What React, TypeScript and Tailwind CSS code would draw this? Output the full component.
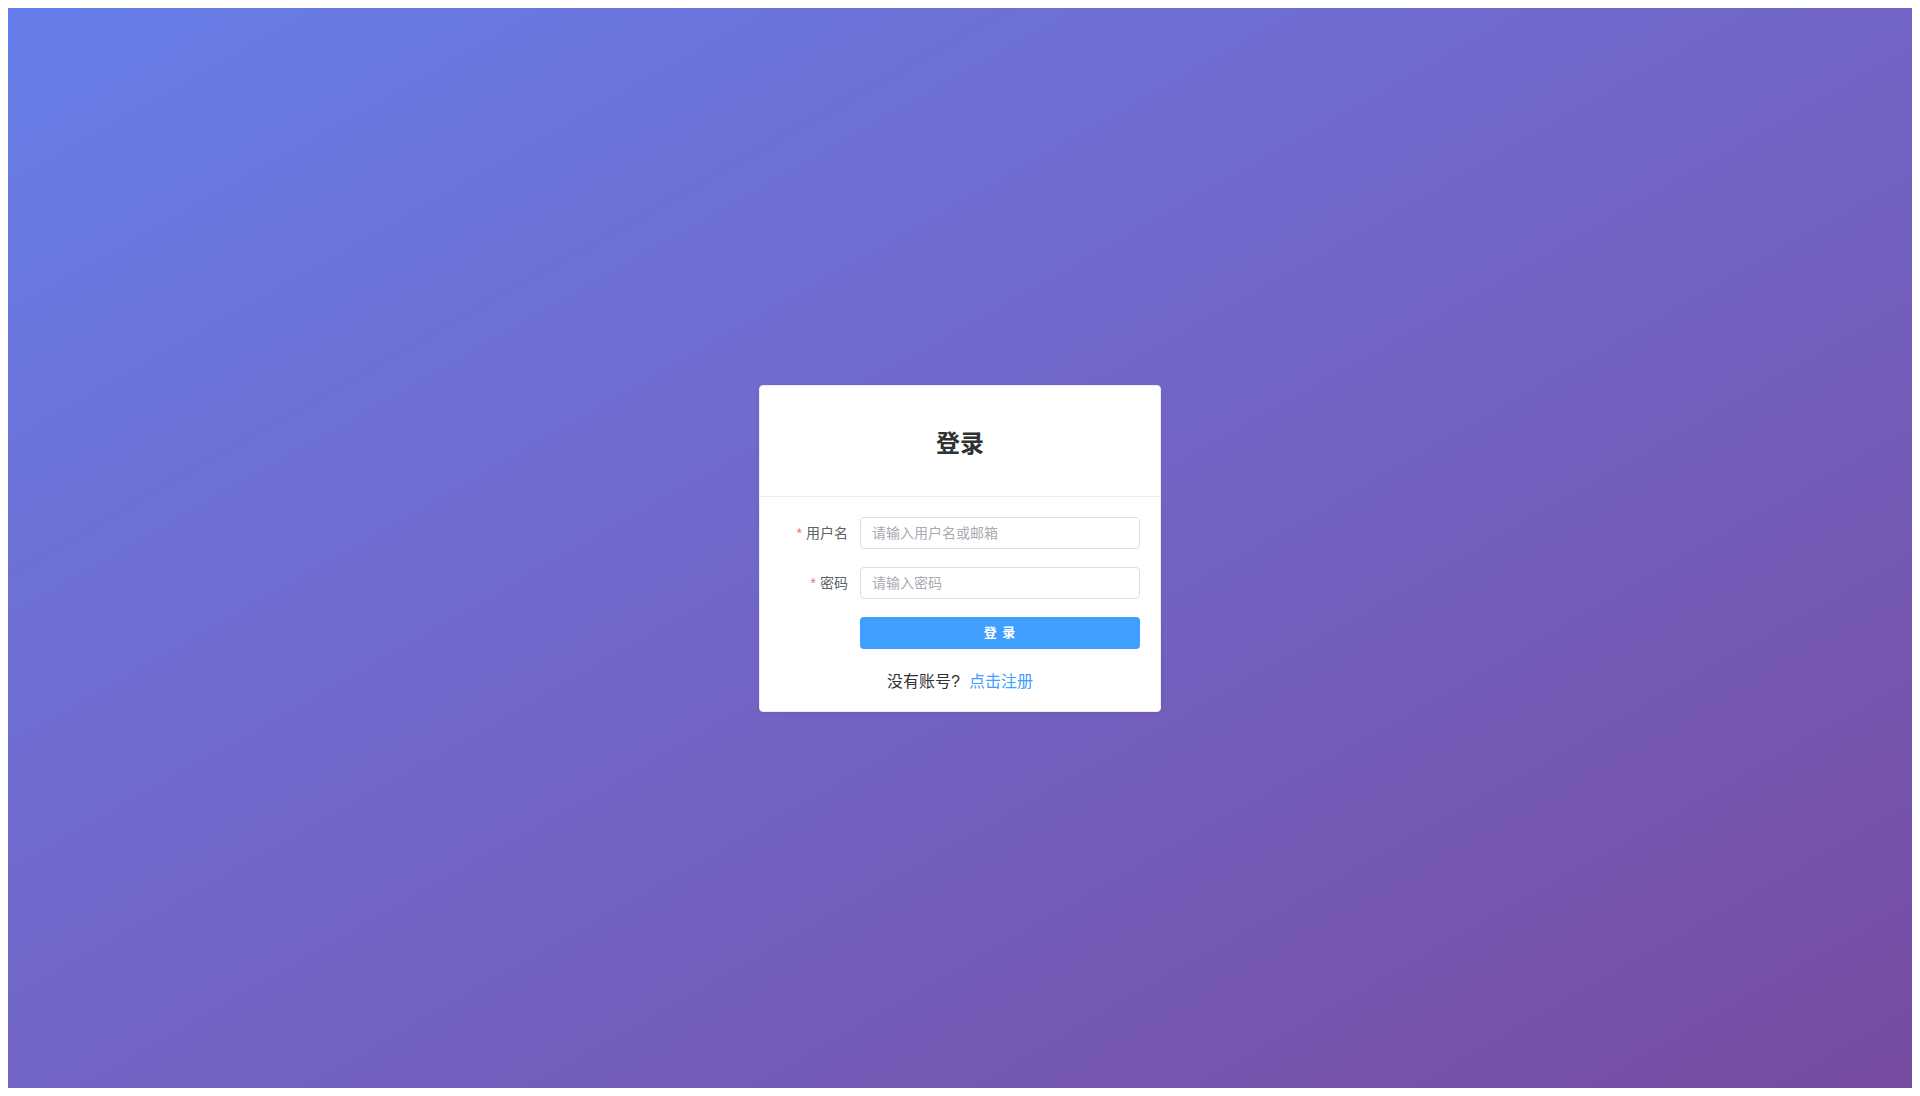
import { useState } from 'react'

const font = 'font-["Liberation_Sans","Noto_Sans_CJK_SC",sans-serif]'

function FormItem({
  label,
  placeholder,
  type = 'text',
  value,
  onChange,
}: {
  label: string
  placeholder: string
  type?: string
  value: string
  onChange: (v: string) => void
}) {
  return (
    <div className="mb-[18px] flex items-center">
      <label className="w-[80px] shrink-0 pr-3 text-right text-sm leading-8 text-[#606266]">
        <span className="mr-1 text-[#f56c6c]">*</span>
        {label}
      </label>
      <input
        type={type}
        value={value}
        onChange={(e) => onChange(e.target.value)}
        placeholder={placeholder}
        className="h-8 flex-1 rounded-[4px] border border-[#dcdfe6] bg-white px-[11px] text-sm text-[#606266] outline-none placeholder:text-[#a8abb2] focus:border-[#409eff]"
      />
    </div>
  )
}

export default function App() {
  const [username, setUsername] = useState('')
  const [password, setPassword] = useState('')

  return (
    <div className={`bg-white p-2 ${font}`}>
      <div className="flex h-[1080px] items-center justify-center bg-gradient-to-br from-[#667eea] to-[#764ba2]">
        {/* Login card */}
        <div className="w-[402px] overflow-hidden rounded-[4px] border border-[#ebeef5] bg-white shadow-[0_1px_4px_0_rgba(0,0,0,0.06)]">
          <div className="border-b border-[#ebeef5] px-5 py-[18px]">
            <h2 className="mt-6 mb-[18px] text-center text-2xl leading-8 font-bold text-[#303133]">登录</h2>
          </div>

          <div className="px-5 pt-5 pb-[17px]">
            <FormItem
              label="用户名"
              placeholder="请输入用户名或邮箱"
              value={username}
              onChange={setUsername}
            />
            <FormItem
              label="密码"
              type="password"
              placeholder="请输入密码"
              value={password}
              onChange={setPassword}
            />

            <div className="mb-[21px] pl-[80px]">
              <button className="h-8 w-full rounded-[4px] bg-[#409eff] text-[13px] font-semibold tracking-[1px] text-white hover:bg-[#66b1ff]">
                登 录
              </button>
            </div>

            <p className="text-center text-base leading-6 text-[#303133]">
              没有账号?&nbsp; <a href="#" className="text-[#409eff]">点击注册</a>
            </p>
          </div>
        </div>
      </div>
    </div>
  )
}
